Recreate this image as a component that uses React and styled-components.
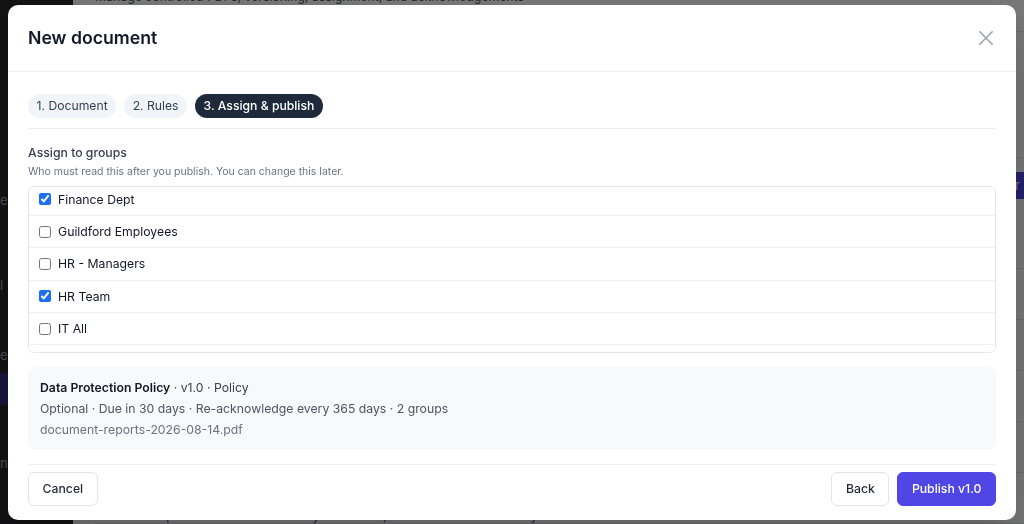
import React, { useState, useLayoutEffect, useRef } from "react";
import styled, { createGlobalStyle, css } from "styled-components";

const GlobalStyle = createGlobalStyle`
  html, body { margin: 0; padding: 0; height: 100%; }
  body {
    font-family: Inter, "Noto Sans", "Liberation Sans", sans-serif;
    color: #111827;
    overflow: hidden;
    -webkit-font-smoothing: antialiased;
  }
  * { box-sizing: border-box; }
`;

/* ---------- background page ---------- */
const Page = styled.div`
  display: flex;
  height: 100vh;
  width: 100vw;
  overflow: hidden;
  background: #ffffff;
`;

const Sidebar = styled.aside`
  width: 73px;
  flex: none;
  background: #27272a;
  display: flex;
  flex-direction: column;
  padding-top: 183px;
`;

const NavItem = styled.div`
  height: ${(p) => p.$h || 34}px;
  margin-top: ${(p) => p.$mt || 0}px;
  display: flex;
  align-items: center;
  font-size: 13px;
  color: #a1a1aa;
  white-space: nowrap;
  overflow: hidden;
  ${(p) =>
    p.$active &&
    css`
      background: #312e81;
      color: transparent;
    `}
`;

const Main = styled.main`
  flex: 1;
  min-width: 0;
  display: flex;
  flex-direction: column;
  padding-left: 22px;
  overflow: hidden;
`;

const Subtitle = styled.div`
  margin-top: -11px;
  font-size: 12.3px;
  line-height: 16px;
  color: #4b5563;
  white-space: nowrap;
`;

const Stats = styled.div`
  margin-top: 26px;
  height: 140px;
  border-top: 1px solid #e5e7eb;
  border-bottom: 1px solid #e5e7eb;
`;

const Toolbar = styled.div`
  margin-top: 14px;
  height: 27px;
  display: flex;
  justify-content: flex-end;
`;

const BgButton = styled.div`
  background: #4f46e5;
  color: #fff;
  font-size: 13px;
  line-height: 27px;
  padding: 0 14px 0 10px;
  border-radius: 6px 0 0 6px;
  margin-right: -10px;
`;

const BgTable = styled.div`
  margin-top: 19px;
  display: flex;
  flex-direction: column;
`;

const BgRow = styled.div`
  height: 51px;
  border-bottom: 1px solid #e5e7eb;
  display: grid;
  grid-template-columns: 43px 127px 90px 128px 1fr;
  align-items: end;
  font-size: 12.3px;
  color: #4b5563;
`;

/* ---------- modal ---------- */
const Overlay = styled.div`
  position: fixed;
  inset: 0;
  background: rgba(0, 0, 0, 0.53);
  display: flex;
  align-items: center;
  justify-content: center;
`;

const Modal = styled.div`
  width: calc(100vw - 16px);
  background: #ffffff;
  border-radius: 10px;
  display: flex;
  flex-direction: column;
  box-shadow: 0 20px 40px rgba(0, 0, 0, 0.2);
`;

const Header = styled.div`
  height: 67px;
  padding: 1px 20px 0;
  display: flex;
  align-items: center;
  justify-content: space-between;
  border-bottom: 1px solid #f0f1f3;
`;

const Title = styled.h2`
  margin: 0;
  font-size: 17.7px;
  line-height: 26px;
  font-weight: 600;
  color: #111827;
`;

const CloseButton = styled.button`
  width: 20px;
  height: 20px;
  padding: 0;
  border: 0;
  background: none;
  display: flex;
  align-items: center;
  justify-content: center;
  cursor: pointer;
  color: #9ca3af;
`;

const Body = styled.div`
  padding: 22px 20px 14px;
  display: flex;
  flex-direction: column;
`;

const Steps = styled.div`
  display: flex;
  gap: 8px;
  padding-bottom: 10px;
  border-bottom: 1px solid #eceef1;
`;

const Step = styled.button`
  height: 24px;
  padding: 0 8.5px;
  border: 0;
  border-radius: 999px;
  font-family: inherit;
  font-size: 12.2px;
  line-height: 24px;
  background: ${(p) => (p.$active ? "#1e293b" : "#f1f5f9")};
  color: ${(p) => (p.$active ? "#ffffff" : "#334155")};
  font-weight: ${(p) => (p.$active ? 500 : 400)};
  cursor: pointer;
`;

const Label = styled.div`
  margin-top: 15px;
  font-size: 12.25px;
  line-height: 18px;
  font-weight: 500;
  color: #374151;
`;

const Hint = styled.div`
  margin-top: 2px;
  font-size: 10.5px;
  line-height: 16px;
  color: #6b7280;
`;

const GroupList = styled.div`
  margin-top: 6px;
  height: 167px;
  border: 1px solid #e5e7eb;
  border-radius: 6px;
  overflow-y: auto;
  scrollbar-width: none;
  &::-webkit-scrollbar { display: none; }
`;

const GroupRow = styled.label`
  height: 32.4px;
  display: flex;
  align-items: center;
  gap: 7px;
  padding-left: 10px;
  border-bottom: 1px solid #f0f1f3;
  font-size: 12.25px;
  color: #111827;
  cursor: pointer;
`;

const Check = styled.input`
  width: 12px;
  height: 12px;
  margin: 0;
  accent-color: #1d6ff2;
`;

const Summary = styled.div`
  margin-top: 14px;
  padding: 10.5px 12px 9.5px;
  background: #f8f9fb;
  border-radius: 8px;
  display: flex;
  flex-direction: column;
`;

const SummaryLine = styled.div`
  font-size: 12.25px;
  line-height: 21px;
  color: ${(p) => p.$color || "#374151"};
  strong { font-weight: 600; color: #111827; }
`;

const Footer = styled.div`
  margin-top: 14px;
  padding-top: 7px;
  border-top: 1px solid #eef0f2;
  display: flex;
  justify-content: space-between;
  align-items: center;
`;

const Actions = styled.div`
  display: flex;
  gap: 8px;
`;

const Button = styled.button`
  height: 34px;
  padding: 0 13.5px;
  border-radius: 6px;
  font-family: inherit;
  font-size: 12.25px;
  font-weight: 500;
  cursor: pointer;
  border: 1px solid ${(p) => (p.$primary ? "#4f46e5" : "#e2e4e8")};
  background: ${(p) => (p.$primary ? "#4f46e5" : "#ffffff")};
  color: ${(p) => (p.$primary ? "#ffffff" : "#1f2937")};
`;

const initialGroups = [
  { name: "Finance Dept", checked: true },
  { name: "Guildford Employees", checked: false },
  { name: "HR - Managers", checked: false },
  { name: "HR Team", checked: true },
  { name: "IT All", checked: false },
  { name: "IT Support", checked: false },
  { name: "Leadership", checked: false },
];

const XIcon = () => (
  <svg width="20" height="20" viewBox="0 0 20 20" fill="none" stroke="currentColor" strokeWidth="1.6" strokeLinecap="round">
    <path d="M3.8 3.8 L16.2 16.2 M16.2 3.8 L3.8 16.2" />
  </svg>
);

export default function App() {
  const [groups, setGroups] = useState(initialGroups);
  const listRef = useRef(null);

  useLayoutEffect(() => {
    if (listRef.current) listRef.current.scrollTop = 3;
  }, []);

  const toggle = (i) =>
    setGroups((g) => g.map((x, j) => (j === i ? { ...x, checked: !x.checked } : x)));

  const selected = groups.filter((g) => g.checked).length;

  return (
    <>
      <GlobalStyle />
      <Page>
        <Sidebar>
          <NavItem>ers</NavItem>
          <NavItem $mt={51}>l</NavItem>
          <NavItem $mt={36}>e</NavItem>
          <NavItem $mt={1} $h={32} $active>Documents</NavItem>
          <NavItem $mt={41}>n</NavItem>
        </Sidebar>
        <Main>
          <Subtitle>Manage controlled PDFs, versioning, assignment, and acknowledgements</Subtitle>
          <Stats />
          <Toolbar>
            <BgButton>Register</BgButton>
          </Toolbar>
          <BgTable>
            {Array.from({ length: 6 }).map((_, i) => (
              <BgRow key={i}>
                <span />
                <span>Groups: 1</span>
                <span>Daniel Ryan</span>
                <span>Groups: 1</span>
                <span>Daniel Ryan</span>
              </BgRow>
            ))}
          </BgTable>
        </Main>
      </Page>

      <Overlay>
        <Modal role="dialog" aria-modal="true">
          <Header>
            <Title>New document</Title>
            <CloseButton aria-label="Close">
              <XIcon />
            </CloseButton>
          </Header>
          <Body>
            <Steps>
              <Step>1. Document</Step>
              <Step>2. Rules</Step>
              <Step $active>3. Assign &amp; publish</Step>
            </Steps>
            <Label>Assign to groups</Label>
            <Hint>Who must read this after you publish. You can change this later.</Hint>
            <GroupList ref={listRef}>
              {groups.map((g, i) => (
                <GroupRow key={g.name}>
                  <Check type="checkbox" checked={g.checked} onChange={() => toggle(i)} />
                  {g.name}
                </GroupRow>
              ))}
            </GroupList>
            <Summary>
              <SummaryLine>
                <strong>Data Protection Policy</strong> · v1.0 · Policy
              </SummaryLine>
              <SummaryLine $color="#4b5563">
                Optional · Due in 30 days · Re-acknowledge every 365 days · {selected} groups
              </SummaryLine>
              <SummaryLine $color="#6b7280">document-reports-2026-08-14.pdf</SummaryLine>
            </Summary>
            <Footer>
              <Button>Cancel</Button>
              <Actions>
                <Button>Back</Button>
                <Button $primary>Publish v1.0</Button>
              </Actions>
            </Footer>
          </Body>
        </Modal>
      </Overlay>
    </>
  );
}
